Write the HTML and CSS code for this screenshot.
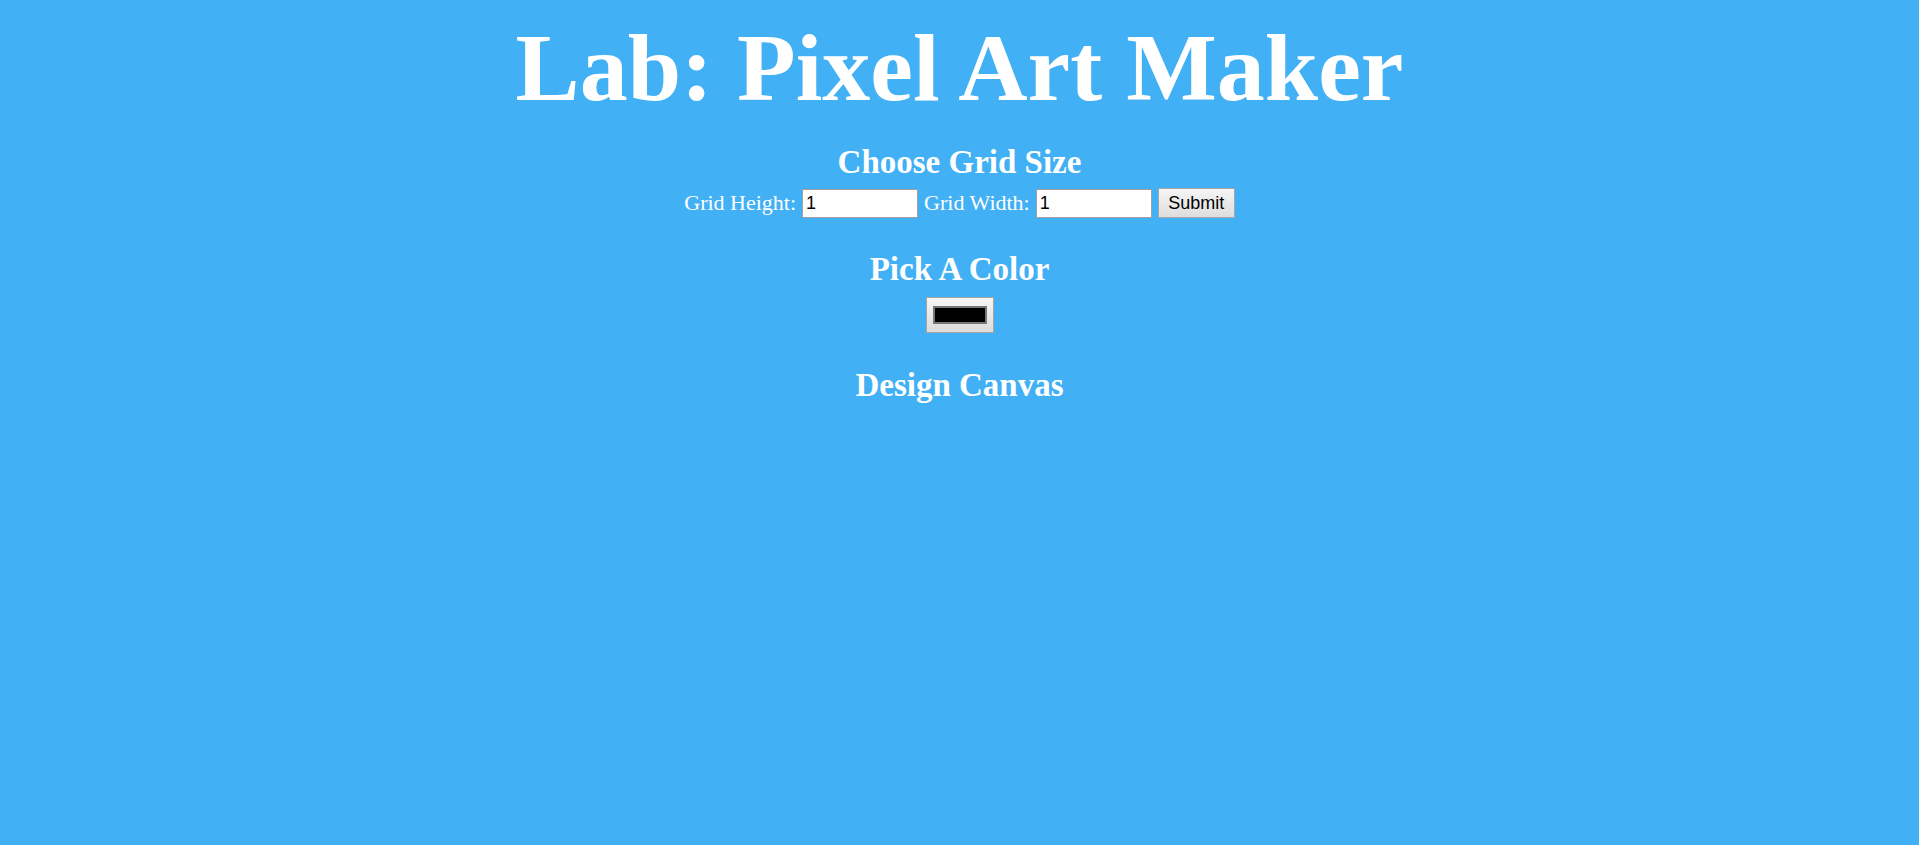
FILE: index.html
```html
<!DOCTYPE html>
<html>
<head>
<meta charset="utf-8">
<title>Pixel Art Maker!</title>
<link rel="stylesheet" href="styles.css">
</head>
<body>
<h1 class="title">Lab: Pixel Art Maker</h1>
<h2 class="heading heading-first">Choose Grid Size</h2>
<form class="size-picker">
  <label class="field-label">Grid Height:</label>
  <input class="num-input" type="text" value="1">
  <label class="field-label">Grid Width:</label>
  <input class="num-input" type="text" value="1">
  <input class="submit-btn" type="button" value="Submit">
</form>
<h2 class="heading">Pick A Color</h2>
<div class="picker-row"><input class="color-picker" type="color" value="#000000"></div>
<h2 class="heading heading-last">Design Canvas</h2>
<table class="pixel-canvas"></table>
</body>
</html>
```
FILE: styles.css
```css
html, body {
  margin: 0;
  padding: 0;
}
body {
  background: #42b0f5;
  color: #ffffff;
  font-family: "Liberation Serif", "Times New Roman", serif;
  text-align: center;
  padding-top: 18px;
  min-height: 845px;
  box-sizing: border-box;
}
.title {
  margin: 0;
  font-size: 96px;
  line-height: 100px;
  font-weight: bold;
}
.heading {
  margin: 32px 0 0;
  font-size: 33px;
  line-height: 38px;
  font-weight: bold;
}
.heading-first {
  margin-top: 25px;
}
.heading-last {
  margin-top: 33px;
}
.size-picker {
  margin-top: 7px;
  display: flex;
  justify-content: center;
  align-items: center;
  height: 30px;
  font-size: 22px;
}
.field-label {
  margin-right: 6px;
}
.num-input {
  box-sizing: border-box;
  width: 116px;
  height: 29px;
  margin-right: 6px;
  padding: 0 3px;
  border: 1px solid #a0a0a0;
  background: #ffffff;
  color: #000000;
  font-family: "Liberation Sans", Arial, sans-serif;
  font-size: 18px;
  outline: none;
}
.submit-btn {
  box-sizing: border-box;
  width: 77px;
  height: 30px;
  padding: 0;
  border: 1px solid #a6a6a6;
  border-radius: 0;
  background: linear-gradient(#f5f5f5, #dedede);
  color: #000000;
  font-family: "Liberation Sans", Arial, sans-serif;
  font-size: 18px;
}
.picker-row {
  margin-top: 9px;
  display: flex;
  justify-content: center;
}
.color-picker {
  -webkit-appearance: none;
  appearance: none;
  box-sizing: border-box;
  width: 68px;
  height: 36px;
  margin: 0;
  padding: 0;
  border: 1px solid #a6a6a6;
  border-radius: 0;
  background: linear-gradient(#f6f6f6, #dcdcdc);
}
.color-picker::-webkit-color-swatch-wrapper {
  padding: 8px 6px;
}
.color-picker::-webkit-color-swatch {
  border: 2px solid #777777;
  border-radius: 0;
}
.pixel-canvas {
  margin: 20px auto 0;
  border-collapse: collapse;
}
```
